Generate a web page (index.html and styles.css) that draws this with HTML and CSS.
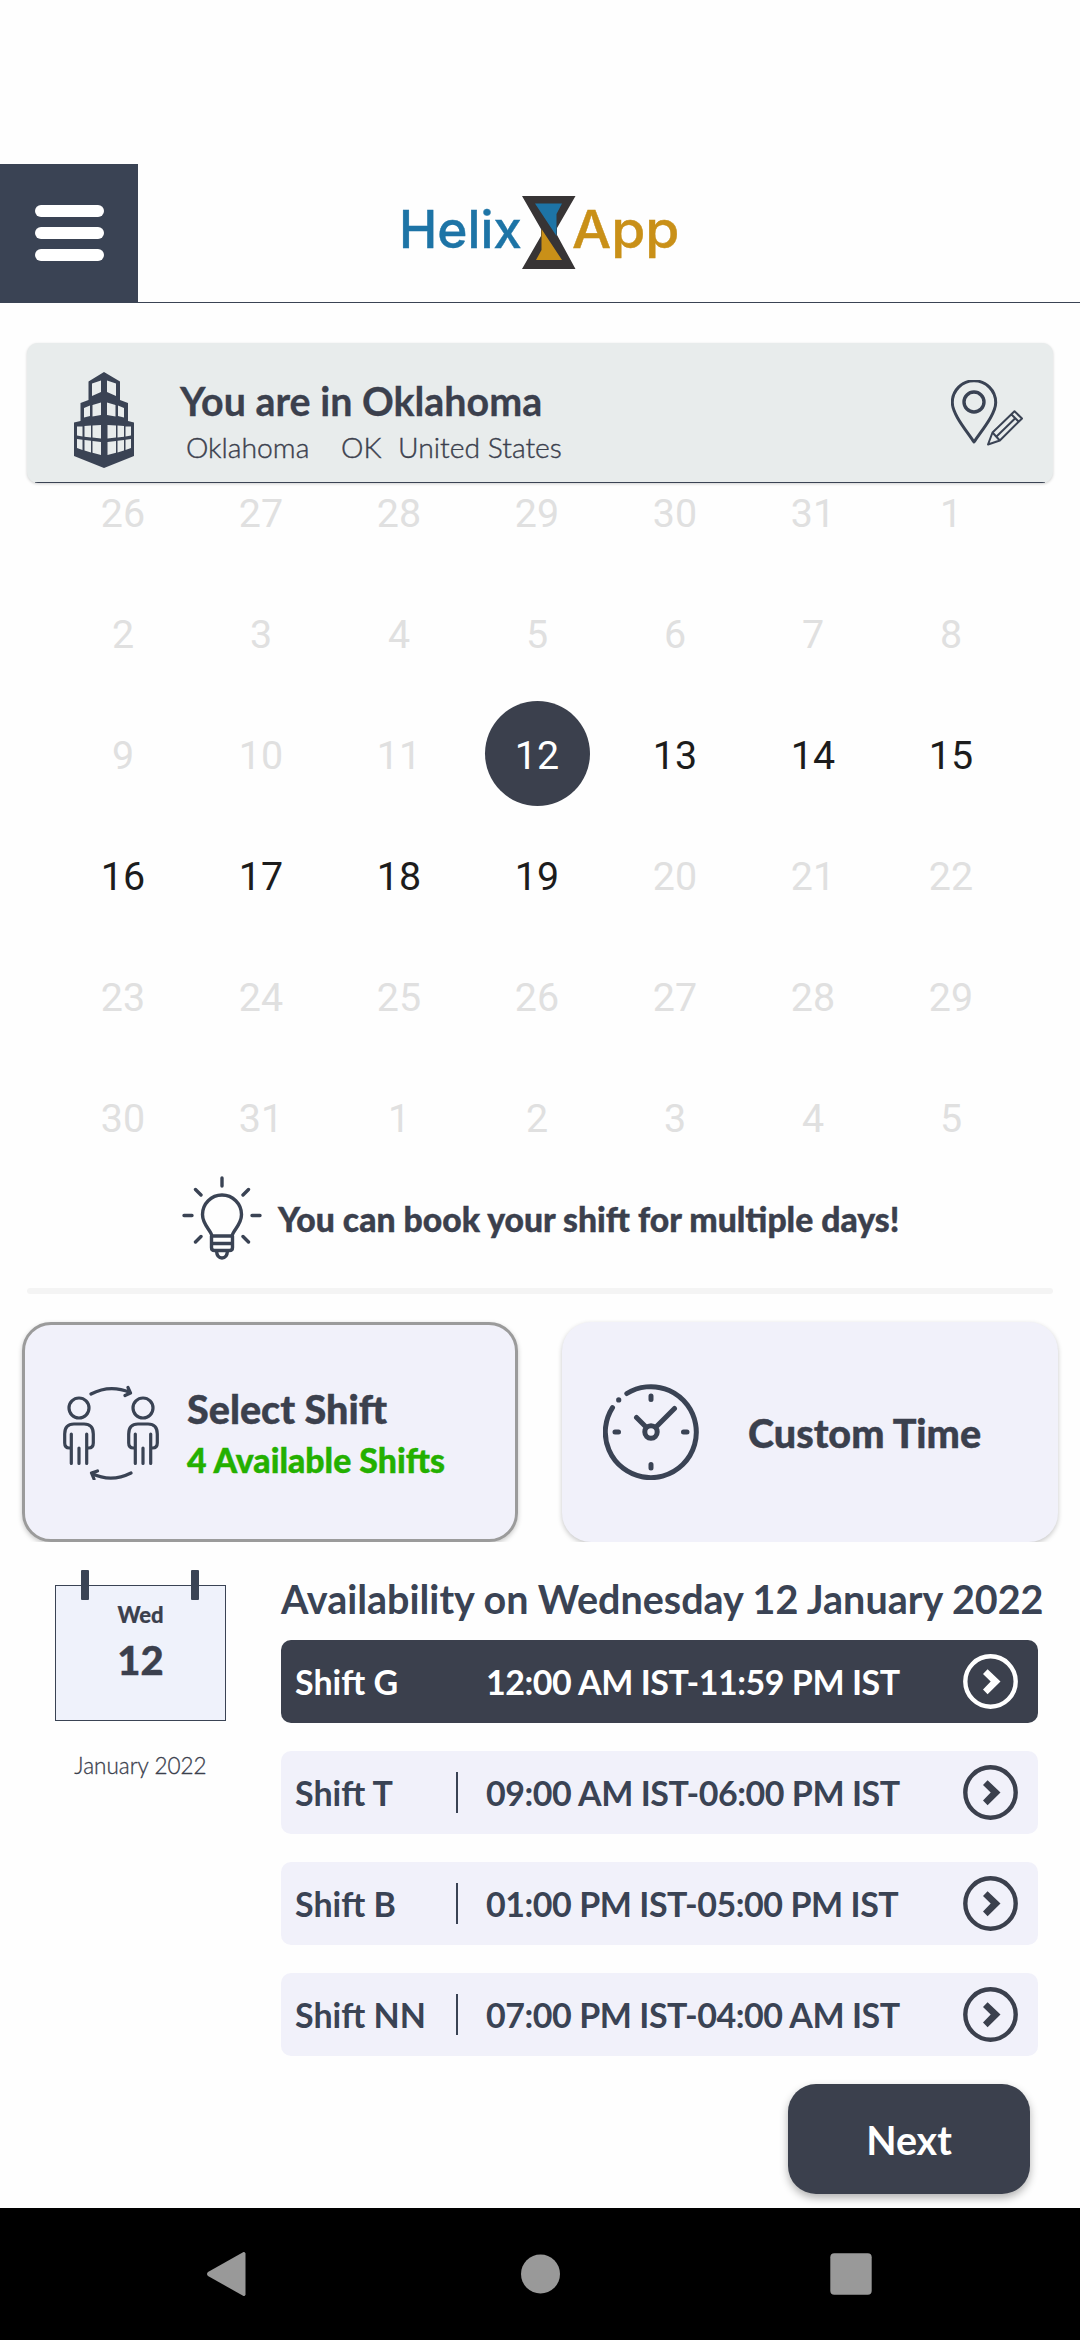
FILE: index.html
```html
<!DOCTYPE html>
<html lang="en">
<head>
<meta charset="utf-8">
<title>Helix App</title>
<link rel="stylesheet" href="styles.css">
</head>
<body>
<svg class="defs" width="0" height="0" aria-hidden="true">
  <symbol id="go" viewBox="0 0 55 55">
    <circle cx="27.5" cy="27.5" r="25.2" fill="none" stroke="currentColor" stroke-width="4.4"/>
    <path d="M20 20 24.600 15.200 37.500 27.500 24.600 40.200 20 35.600 27.700 27.500Z" fill="currentColor"/>
  </symbol>
  <symbol id="person" viewBox="0 0 32 70">
    <g fill="none" stroke="currentColor" stroke-width="3.200" stroke-linecap="round" stroke-linejoin="round">
      <circle cx="16" cy="12" r="10"/>
      <path d="M8.300 38v29.500M23.700 38v29.500M16 52v15.500M8.300 52H6.500Q1.700 52 1.700 47V38Q1.700 28 11 28H21Q30.300 28 30.300 38V47Q30.300 52 25.500 52H23.700"/>
    </g>
  </symbol>
</svg>

<header class="topbar">
  <button class="menu" aria-label="Menu"><span></span><span></span><span></span></button>
  <svg class="logo" viewBox="0 0 280 76">
    <text class="logo-blue" x="-1" y="53.300" textLength="123" lengthAdjust="spacingAndGlyphs">Helix</text>
    <path d="M122 1h53.500L157 33v7L175.500 74H122L141 41V34Z" fill="#373435"/>
    <path d="M135 8.500h27l-5.500 10.500V41Z" fill="#1d74a6"/>
    <path d="M141.500 34 162 65H136l5.500-10Z" fill="#c99018"/>
    <text class="logo-gold" x="172" y="53.300" textLength="107.500" lengthAdjust="spacingAndGlyphs">App</text>
  </svg>
</header>

<main class="content">
  <section class="location">
    <svg class="building" viewBox="0 0 60 96">
      <path d="M30 0 46 9.500V28l8 3V49l6 1.500V84L30 96 0 84V50.500L6.500 49V31L14.500 28V9.500Z" fill="#3a4354"/>
      <path d="M18 11.500 27 8.500V20L18 24ZM42 11.500 33 8.500V20L42 24ZM10 36l6-2.500V44l-6 1.500ZM18.500 33 27 30.500V43L18.500 44.500ZM50 36l-6-2.500V44l6 1.500ZM41.500 33 33 30.500V43L41.500 44.500Z
      M3 54.500H8.500V64.500L3 63.500ZM10.500 54 17 53.500V65.500L10.500 64.800ZM18.500 53.500 27 53V66.500L18.500 65.500ZM57 54.500H51.500V64.500L57 63.500ZM50 54 43.500 53.500V65.500L50 64.800ZM42 53.500 33.500 53V66.500L42 65.500Z
      M3 67 8.500 67.700V78L3 76ZM10.500 68 17 68.800V80.500L10.500 78.500ZM18.500 69 27 70V83L18.500 80.800ZM57 67 51.500 67.700V78L57 76ZM50 68 43.500 68.800V80.500L50 78.500ZM42 69 33.500 70V83L42 80.800Z" fill="#e8ecec"/>
    </svg>
    <div class="place">
      <h1>You are in Oklahoma</h1>
      <p><span class="city">Oklahoma</span><span class="state">OK</span><span>United States</span></p>
    </div>
    <svg class="pin" viewBox="0 0 72 66">
      <g fill="none" stroke="#3a4354" stroke-linejoin="round">
        <path d="M23 62C15 50 1.300 34 1.300 22.500a21.700 21.700 0 0 1 43.400 0C44.700 34 31 50 23 62Z" stroke-width="3"/>
        <circle cx="23" cy="22" r="10" stroke-width="3.400"/>
        <path d="M37 64.500 41.500 52.500 63.500 31.300 71 38.500 48.800 60.500ZM41.500 52.500 48.800 60.500M60.500 34.500 67.500 41.500M45.500 56.500 64.500 38" stroke-width="2"/>
      </g>
    </svg>
  </section>

  <section class="calendar">
    <span>26</span><span>27</span><span>28</span><span>29</span><span>30</span><span>31</span><span>1</span>
    <span>2</span><span>3</span><span>4</span><span>5</span><span>6</span><span>7</span><span>8</span>
    <span>9</span><span>10</span><span>11</span><span class="picked">12</span><span class="open">13</span><span class="open">14</span><span class="open">15</span>
    <span class="open">16</span><span class="open">17</span><span class="open">18</span><span class="open">19</span><span>20</span><span>21</span><span>22</span>
    <span>23</span><span>24</span><span>25</span><span>26</span><span>27</span><span>28</span><span>29</span>
    <span>30</span><span>31</span><span>1</span><span>2</span><span>3</span><span>4</span><span>5</span>
  </section>

  <section class="tip">
    <svg class="bulb" viewBox="0 0 80 84">
      <g fill="none" stroke="#3a4354" stroke-width="3.400" stroke-linecap="round" stroke-linejoin="round">
        <path d="M40 2V10M13.500 13.500 19 19M66.500 13.500 61 19M2 39.500H10M78 39.500H70M13.500 66 19 60.500M66.500 66 61 60.500"/>
        <path d="M30 60C29 54 20.500 49 20.500 38.500a19.500 19.500 0 0 1 39 0C59.500 49 51 54 50 60ZM29.500 60V71.500Q29.500 74.500 32.500 74.500H47.500Q50.500 74.500 50.500 71.500V60M30 67.500H50M34.500 75Q35 82 40 82T45.500 75"/>
      </g>
    </svg>
    <p>You can book your shift for multiple days!</p>
  </section>
  <hr class="rule">

  <section class="modes">
    <button class="mode selected">
      <svg class="mode-icon" viewBox="0 0 96 96">
        <use href="#person" x="0" y="12" width="32" height="70"/>
        <use href="#person" x="64" y="12" width="32" height="70"/>
        <path d="M28 10Q47 0 67 8.500M65 3.500 67.500 9 62 11.500M68 89Q48 99 29 89.500M31 95 28.500 89 34.500 87" fill="none" stroke="currentColor" stroke-width="3.200" stroke-linecap="round" stroke-linejoin="round"/>
      </svg>
      <span class="mode-text"><b>Select Shift</b><em>4 Available Shifts</em></span>
    </button>
    <button class="mode">
      <svg class="mode-icon" viewBox="0 0 96 96">
        <g fill="none" stroke="currentColor" stroke-width="5" stroke-linecap="round">
          <path d="M23.800 9.500A45.500 45.500 0 1 1 9.500 23.600M48 12V15.500M48 80.500V84M12 48H15.500M80.500 48H84M42.500 42.500 33.500 33.500M53.500 42.500 71.500 24.500"/>
          <circle cx="48" cy="48" r="6.200"/>
        </g>
        <circle cx="15.700" cy="15.900" r="2.600" fill="currentColor"/>
      </svg>
      <span class="mode-text custom"><b>Custom Time</b></span>
    </button>
  </section>

  <section class="availability">
    <aside class="date">
      <div class="sheet">
        <i class="ring left"></i><i class="ring right"></i>
        <strong class="weekday">Wed</strong>
        <strong class="day">12</strong>
      </div>
      <p class="month">January 2022</p>
    </aside>
    <div class="shifts">
      <h2>Availability on Wednesday 12 January 2022</h2>
      <div class="shift active"><span class="name">Shift G</span><span class="time">12:00 AM IST-11:59 PM IST</span><svg class="go"><use href="#go"/></svg></div>
      <div class="shift"><span class="name">Shift T</span><span class="time">09:00 AM IST-06:00 PM IST</span><svg class="go"><use href="#go"/></svg></div>
      <div class="shift"><span class="name">Shift B</span><span class="time">01:00 PM IST-05:00 PM IST</span><svg class="go"><use href="#go"/></svg></div>
      <div class="shift"><span class="name">Shift NN</span><span class="time">07:00 PM IST-04:00 AM IST</span><svg class="go"><use href="#go"/></svg></div>
      <button class="next">Next</button>
    </div>
  </section>
</main>

<nav class="navbar">
  <svg viewBox="0 0 48 48"><path d="M40.500 3.500V44.500Q40 46.500 38.500 46L3 26Q1 24 3 22L38.500 2Q40 1.500 40.500 3.500Z" fill="#999"/></svg>
  <svg viewBox="0 0 48 48"><circle cx="24.5" cy="24" r="19.500" fill="#999"/></svg>
  <svg viewBox="0 0 48 48"><rect x="3.300" y="3.300" width="41.400" height="41.400" rx="4" fill="#999"/></svg>
</nav>
</body>
</html>
```
FILE: styles.css
```css
* { box-sizing: border-box; }
body {
  margin: 0;
  width: 1080px;
  height: 2340px;
  display: flex;
  flex-direction: column;
  overflow: hidden;
  background: #fefefe;
  color: #3b404d;
  font-family: Lato, "Liberation Sans", sans-serif;
}
h1, h2, p { margin: 0; white-space: nowrap; }
button { border: 0; padding: 0; font: inherit; color: inherit; text-align: left; }
svg { display: block; flex: none; }
.defs { position: absolute; }

.topbar {
  margin-top: 164px;
  height: 139px;
  flex: none;
  display: flex;
  border-bottom: 1px solid #3a4354;
}
.menu {
  width: 138px;
  height: 138px;
  display: flex;
  flex-direction: column;
  align-items: center;
  justify-content: center;
  gap: 10.5px;
  background: #3a4354;
}
.menu span { width: 69px; height: 11.500px; border-radius: 6px; background: #fff; }
.logo { width: 280px; height: 76px; margin: 31px 0 0 262px; overflow: visible; }
.logo text { font-family: Inter, sans-serif; font-size: 52px; font-weight: 500; stroke-width: .4px; }
.logo-blue { fill: #1d74a6; stroke: #1d74a6; }
.logo-gold { fill: #c99018; stroke: #c99018; }

.content { flex: 1; display: flex; flex-direction: column; }
.location {
  position: relative;
  z-index: 1;
  margin: 40px 27px 0;
  height: 140px;
  display: flex;
  overflow: hidden;
  border-radius: 11px;
  background: linear-gradient(#3a4354, #3a4354) 8px 100% / calc(100% - 16px) 1px no-repeat, #e8ecec;
  box-shadow: 0 1px 3px rgba(0, 0, 0, .18);
}
.building { width: 60px; height: 96px; margin: 29px 46px 0 47px; }
.place { flex: 1; padding-top: 34px; }
.place h1 { font-size: 39.400px; line-height: 48px; font-weight: 700; -webkit-text-stroke: .3px; }
.place p { display: flex; padding-left: 6px; margin-top: 4px; font-size: 28.300px; line-height: 36px; font-weight: 300; -webkit-text-stroke: .4px; }
.city { width: 155px; }
.state { width: 57px; }
.pin { width: 72px; height: 66px; margin: 37px 30px 0 0; }

.calendar {
  margin: -32px 60px 0 54px;
  display: grid;
  grid-template-columns: repeat(7, 138px);
  grid-auto-rows: 121px;
  place-items: center;
  font: 400 39.400px/105px Roboto, sans-serif;
  color: #e0e0e0;
}
.calendar span { width: 105px; height: 105px; padding-top: 2px; border-radius: 50%; text-align: center; }
.calendar .open { color: #1c1c1c; }
.calendar .picked { background: #3b404d; color: #fff; }

.tip { height: 84px; margin: -1px 0 0 182px; display: flex; align-items: center; }
.bulb { width: 80px; height: 84px; margin-right: 16px; }
.tip p { padding-top: 2px; font-size: 33.700px; font-weight: 900; -webkit-text-stroke: .4px; font-variant-ligatures: common-ligatures; }
.rule { width: 1026px; height: 6px; margin: 28px 27px 0; border: 0; border-radius: 3px; background: #f4f4f4; }

.modes {
  height: 220px;
  margin-top: 28px;
  padding: 0 22px;
  display: flex;
  justify-content: space-between;
  clip-path: inset(-5px 0 0 0);
}
.mode {
  width: 496px;
  display: flex;
  align-items: center;
  padding-left: 41px;
  border-radius: 29px;
  background: #f1f1fa;
  box-shadow: 0 2px 5px rgba(0, 0, 0, .22);
}
.mode.selected { border: 3px solid #9b9b9b; padding-left: 38px; }
.mode-icon { width: 96px; height: 96px; color: #3a4354; }
.mode-text { display: flex; flex-direction: column; margin: 5px 0 0 28px; white-space: nowrap; -webkit-text-stroke: .4px; }
.mode-text b { font-size: 39.500px; line-height: 48px; font-weight: 900; }
.mode-text em { font-size: 33.800px; line-height: 48px; font-style: normal; font-weight: 900; color: #24b000; margin-top: 3px; }
.mode-text.custom { margin: 2px 0 0 49px; }

.availability { display: flex; }
.date { width: 171px; margin: 43px 55px 0; flex: none; }
.sheet {
  position: relative;
  height: 136px;
  display: flex;
  flex-direction: column;
  align-items: center;
  border: 1px solid #3a4354;
  background: #eff2fb;
}
.ring { position: absolute; top: -16px; width: 8px; height: 30px; border-radius: 1px; background: #3a4354; }
.ring.left { left: 25px; }
.ring.right { right: 26px; }
.weekday { margin-top: 15px; font-size: 22px; line-height: 27px; font-weight: 900; -webkit-text-stroke: .2px; }
.day { margin-top: 8px; font-size: 40px; line-height: 48px; font-weight: 900; -webkit-text-stroke: .4px; }
.month { margin-top: 31px; font-size: 22.500px; line-height: 28px; font-weight: 300; text-align: center; -webkit-text-stroke: .3px; }
.shifts { flex: 1; display: flex; flex-direction: column; }
.shifts h2 { margin-top: 33px; height: 65px; font-size: 39.500px; line-height: 48px; font-weight: 700; color: #3a4354; }
.shift {
  width: 757px;
  height: 83px;
  margin-bottom: 28px;
  padding: 0 20px 0 14px;
  display: flex;
  align-items: center;
  border-radius: 10px;
  background: #f1f1fa;
  color: #3a4354;
  font-size: 34px;
  font-weight: 700;
  white-space: nowrap;
}
.name { width: 163px; height: 41px; line-height: 42px; border-right: 2px solid #3a4354; }
.time { flex: 1; padding-left: 28px; line-height: 42px; letter-spacing: -.45px; }
.go { width: 55px; height: 55px; color: #3b404d; }
.shift.active { background: #3b404d; color: #fff; }
.active .name { border-color: transparent; }
.active .go { color: #fff; }
.next {
  width: 242px;
  height: 110px;
  margin-left: 507px;
  border-radius: 28px;
  background: #3b404d;
  color: #fff;
  font-size: 39.400px;
  font-weight: 700;
  text-align: center;
  padding-top: 1px;
  box-shadow: 0 4px 8px rgba(0, 0, 0, .3);
}

.navbar {
  position: relative;
  z-index: 1;
  height: 132px;
  flex: none;
  display: flex;
  justify-content: space-between;
  align-items: center;
  padding: 0 205px 0 205px;
  background: #000;
}
.navbar svg { width: 48px; height: 48px; }
```
